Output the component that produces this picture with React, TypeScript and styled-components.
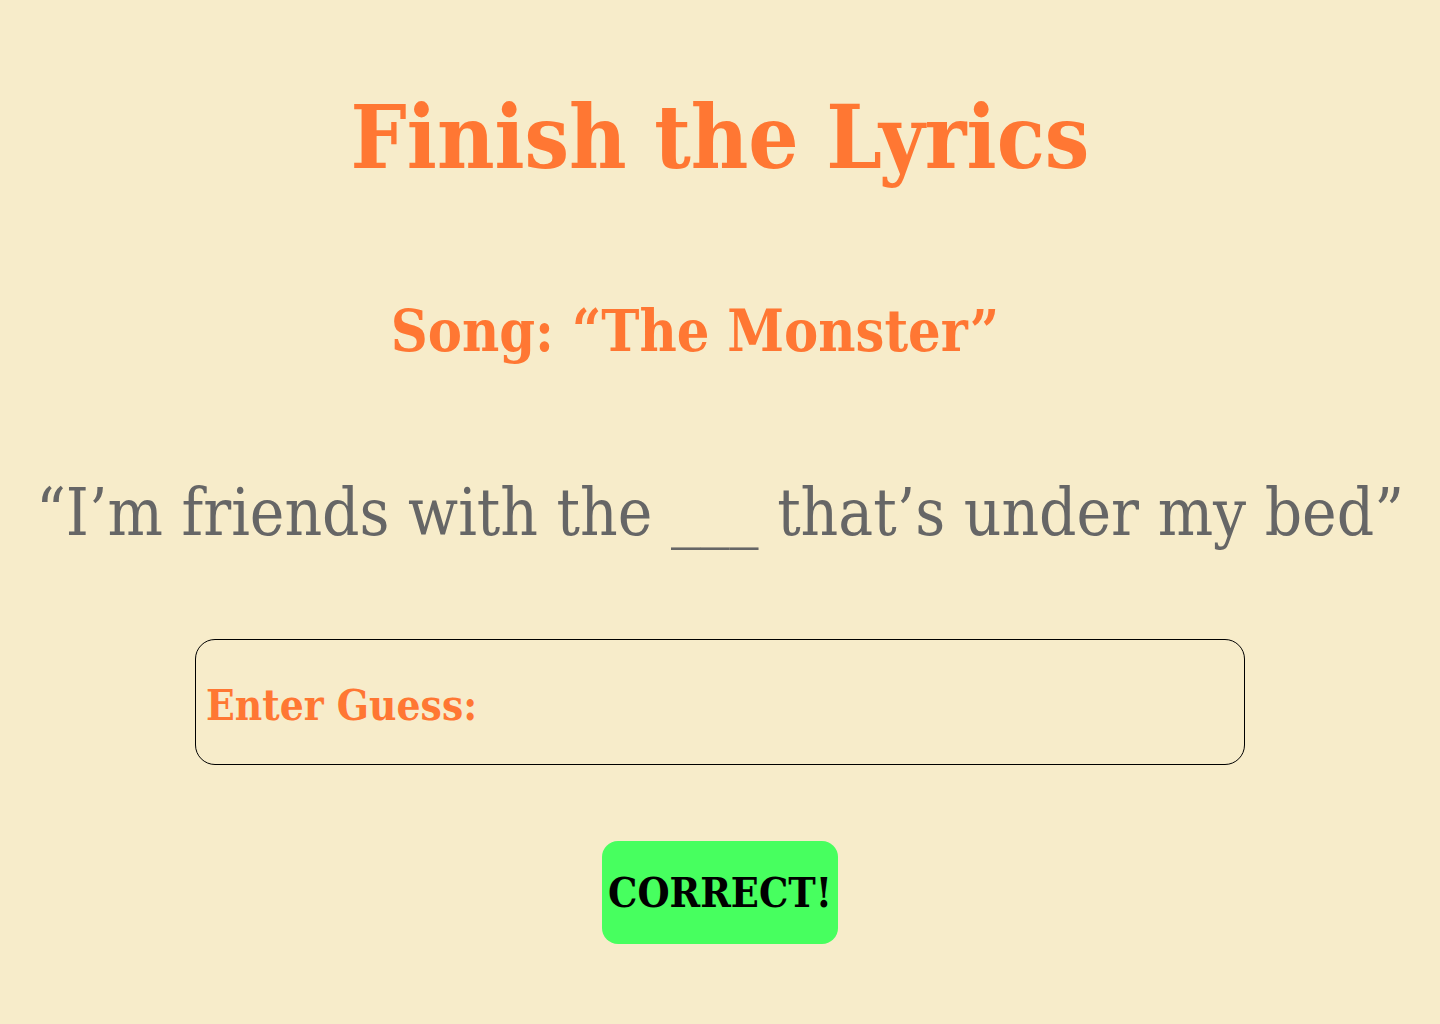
import React from "react";
import styled, { createGlobalStyle } from "styled-components";

const GlobalStyle = createGlobalStyle`
  html, body {
    margin: 0;
    padding: 0;
    background-color: #f7ecca;
  }
  #root {
    min-height: 1024px;
  }
`;

const Page = styled.main`
  display: flex;
  flex-direction: column;
  align-items: center;
  min-height: 1024px;
  background-color: #f7ecca;
  font-family: "DejaVu Serif Condensed", "DejaVu Serif", "Liberation Serif", serif;
`;

const Title = styled.h1`
  margin: 82px 0 0;
  color: #ff7733;
  font-weight: 700;
  font-size: 88px;
  line-height: 110px;
`;

const SongTitle = styled.h2`
  margin: 99px 0 0;
  padding-right: 50px;
  color: #ff7733;
  font-weight: 700;
  font-size: 57px;
  line-height: 80px;
`;

const Lyric = styled.p`
  margin: 102px 0 0;
  color: #666666;
  font-weight: 400;
  font-size: 65px;
  line-height: 80px;
`;

const GuessBox = styled.label`
  display: flex;
  align-items: center;
  box-sizing: border-box;
  width: 1050px;
  height: 126px;
  margin-top: 86px;
  padding: 6px 10px 0;
  border: 1px solid #000;
  border-radius: 20px;
`;

const GuessLabel = styled.span`
  color: #ff7733;
  font-weight: 700;
  font-size: 42px;
  white-space: nowrap;
`;

const GuessInput = styled.input`
  flex: 1;
  height: 100%;
  border: none;
  background: transparent;
  outline: none;
  font-size: 42px;
`;

const ResultButton = styled.button<{ $correct: boolean }>`
  margin-top: 76px;
  width: 236px;
  height: 103px;
  padding: 0;
  border: none;
  border-radius: 16px;
  background-color: ${(props) => (props.$correct ? "#47ff5f" : "#ff5f47")};
  color: #000;
  font-family: inherit;
  font-weight: 700;
  font-size: 41px;
  cursor: pointer;
`;

export default function App() {
  return (
    <>
      <GlobalStyle />
      <Page>
        <Title>Finish the Lyrics</Title>
        <SongTitle>Song: “The Monster”</SongTitle>
        <Lyric>“I’m friends with the ___ that’s under my bed”</Lyric>
        <GuessBox>
          <GuessLabel>Enter Guess:</GuessLabel>
          <GuessInput type="text" />
        </GuessBox>
        <ResultButton $correct>CORRECT!</ResultButton>
      </Page>
    </>
  );
}
